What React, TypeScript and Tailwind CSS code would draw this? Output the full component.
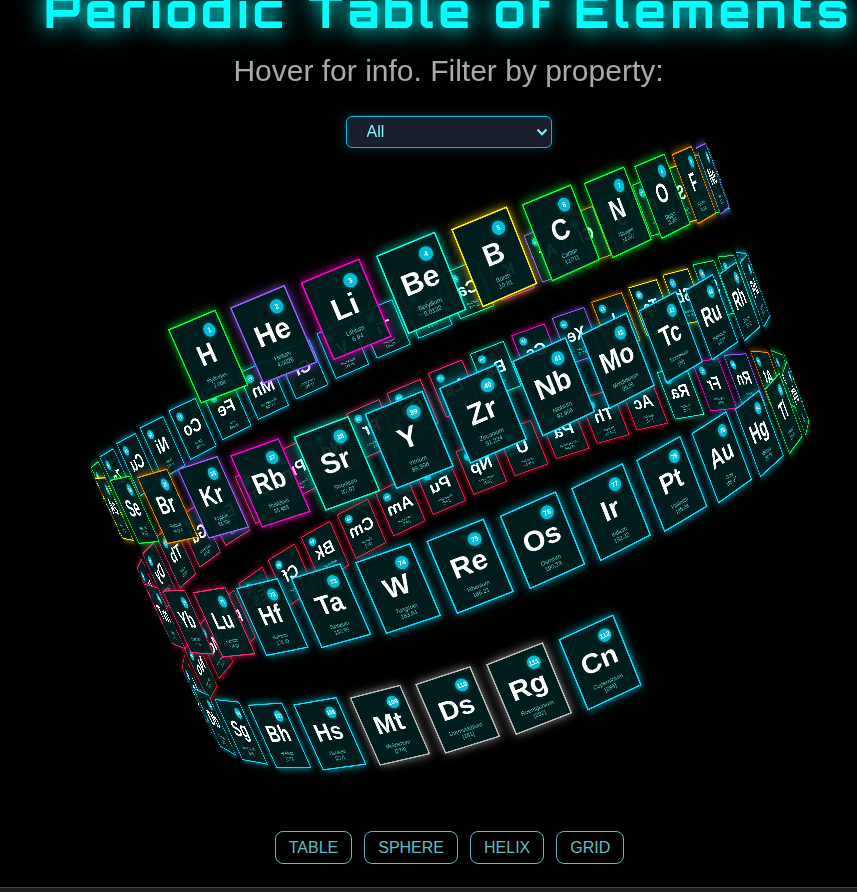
import React from "react";

type Category =
  | "nonmetal"
  | "noble"
  | "alkali"
  | "alkaline"
  | "metalloid"
  | "halogen"
  | "transition"
  | "post"
  | "lanthanide"
  | "actinide"
  | "unknown";

const TONES: Record<Category, string> = {
  nonmetal: "border-[#00ff33] shadow-[0_0_20px_rgba(0,255,51,0.7)]",
  noble: "border-[#9c5cff] shadow-[0_0_20px_rgba(156,92,255,0.7)]",
  alkali: "border-[#ff00cc] shadow-[0_0_20px_rgba(255,0,204,0.7)]",
  alkaline: "border-[#00ffd5] shadow-[0_0_20px_rgba(0,255,213,0.7)]",
  metalloid: "border-[#fff000] shadow-[0_0_20px_rgba(255,240,0,0.7)]",
  halogen: "border-[#ff9100] shadow-[0_0_20px_rgba(255,145,0,0.7)]",
  transition: "border-[#00e1ff] shadow-[0_0_20px_rgba(0,225,255,0.7)]",
  post: "border-[#00ff66] shadow-[0_0_20px_rgba(0,255,102,0.7)]",
  lanthanide: "border-[#ff2970] shadow-[0_0_20px_rgba(255,41,112,0.7)]",
  actinide: "border-[#ff1744] shadow-[0_0_20px_rgba(255,23,68,0.7)]",
  unknown: "border-[#bdbdbd] shadow-[0_0_20px_rgba(189,189,189,0.7)]",
};

const ELEMENTS: [string, string, string, Category][] = [
  ["H", "Hydrogen", "1.008", "nonmetal"],
  ["He", "Helium", "4.0026", "noble"],
  ["Li", "Lithium", "6.94", "alkali"],
  ["Be", "Beryllium", "9.0122", "alkaline"],
  ["B", "Boron", "10.81", "metalloid"],
  ["C", "Carbon", "12.011", "nonmetal"],
  ["N", "Nitrogen", "14.007", "nonmetal"],
  ["O", "Oxygen", "15.999", "nonmetal"],
  ["F", "Fluorine", "18.998", "halogen"],
  ["Ne", "Neon", "20.180", "noble"],
  ["Na", "Sodium", "22.990", "alkali"],
  ["Mg", "Magnesium", "24.305", "alkaline"],
  ["Al", "Aluminium", "26.982", "post"],
  ["Si", "Silicon", "28.085", "metalloid"],
  ["P", "Phosphorus", "30.974", "nonmetal"],
  ["S", "Sulfur", "32.06", "nonmetal"],
  ["Cl", "Chlorine", "35.45", "halogen"],
  ["Ar", "Argon", "39.948", "noble"],
  ["K", "Potassium", "39.098", "alkali"],
  ["Ca", "Calcium", "40.078", "alkaline"],
  ["Sc", "Scandium", "44.956", "transition"],
  ["Ti", "Titanium", "47.867", "transition"],
  ["V", "Vanadium", "50.942", "transition"],
  ["Cr", "Chromium", "51.996", "transition"],
  ["Mn", "Manganese", "54.938", "transition"],
  ["Fe", "Iron", "55.845", "transition"],
  ["Co", "Cobalt", "58.933", "transition"],
  ["Ni", "Nickel", "58.693", "transition"],
  ["Cu", "Copper", "63.546", "transition"],
  ["Zn", "Zinc", "65.38", "transition"],
  ["Ga", "Gallium", "69.723", "post"],
  ["Ge", "Germanium", "72.630", "metalloid"],
  ["As", "Arsenic", "74.922", "metalloid"],
  ["Se", "Selenium", "78.971", "nonmetal"],
  ["Br", "Bromine", "79.904", "halogen"],
  ["Kr", "Krypton", "83.798", "noble"],
  ["Rb", "Rubidium", "85.468", "alkali"],
  ["Sr", "Strontium", "87.62", "alkaline"],
  ["Y", "Yttrium", "88.906", "transition"],
  ["Zr", "Zirconium", "91.224", "transition"],
  ["Nb", "Niobium", "92.906", "transition"],
  ["Mo", "Molybdenum", "95.95", "transition"],
  ["Tc", "Technetium", "[98]", "transition"],
  ["Ru", "Ruthenium", "101.07", "transition"],
  ["Rh", "Rhodium", "102.91", "transition"],
  ["Pd", "Palladium", "106.42", "transition"],
  ["Ag", "Silver", "107.87", "transition"],
  ["Cd", "Cadmium", "112.41", "transition"],
  ["In", "Indium", "114.82", "post"],
  ["Sn", "Tin", "118.71", "post"],
  ["Sb", "Antimony", "121.76", "metalloid"],
  ["Te", "Tellurium", "127.60", "metalloid"],
  ["I", "Iodine", "126.90", "halogen"],
  ["Xe", "Xenon", "131.29", "noble"],
  ["Cs", "Cesium", "132.91", "alkali"],
  ["Ba", "Barium", "137.33", "alkaline"],
  ["La", "Lanthanum", "138.91", "lanthanide"],
  ["Ce", "Cerium", "140.12", "lanthanide"],
  ["Pr", "Praseodymium", "140.91", "lanthanide"],
  ["Nd", "Neodymium", "144.24", "lanthanide"],
  ["Pm", "Promethium", "[145]", "lanthanide"],
  ["Sm", "Samarium", "150.36", "lanthanide"],
  ["Eu", "Europium", "151.96", "lanthanide"],
  ["Gd", "Gadolinium", "157.25", "lanthanide"],
  ["Tb", "Terbium", "158.93", "lanthanide"],
  ["Dy", "Dysprosium", "162.50", "lanthanide"],
  ["Ho", "Holmium", "164.93", "lanthanide"],
  ["Er", "Erbium", "167.26", "lanthanide"],
  ["Tm", "Thulium", "168.93", "lanthanide"],
  ["Yb", "Ytterbium", "173.05", "lanthanide"],
  ["Lu", "Lutetium", "174.97", "lanthanide"],
  ["Hf", "Hafnium", "178.49", "transition"],
  ["Ta", "Tantalum", "180.95", "transition"],
  ["W", "Tungsten", "183.84", "transition"],
  ["Re", "Rhenium", "186.21", "transition"],
  ["Os", "Osmium", "190.23", "transition"],
  ["Ir", "Iridium", "192.22", "transition"],
  ["Pt", "Platinum", "195.08", "transition"],
  ["Au", "Gold", "196.97", "transition"],
  ["Hg", "Mercury", "200.59", "transition"],
  ["Tl", "Thallium", "204.38", "post"],
  ["Pb", "Lead", "207.2", "post"],
  ["Bi", "Bismuth", "208.98", "post"],
  ["Po", "Polonium", "[209]", "post"],
  ["At", "Astatine", "[210]", "halogen"],
  ["Rn", "Radon", "[222]", "noble"],
  ["Fr", "Francium", "[223]", "alkali"],
  ["Ra", "Radium", "[226]", "alkaline"],
  ["Ac", "Actinium", "[227]", "actinide"],
  ["Th", "Thorium", "232.04", "actinide"],
  ["Pa", "Protactinium", "231.04", "actinide"],
  ["U", "Uranium", "238.03", "actinide"],
  ["Np", "Neptunium", "[237]", "actinide"],
  ["Pu", "Plutonium", "[244]", "actinide"],
  ["Am", "Americium", "[243]", "actinide"],
  ["Cm", "Curium", "[247]", "actinide"],
  ["Bk", "Berkelium", "[247]", "actinide"],
  ["Cf", "Californium", "[251]", "actinide"],
  ["Es", "Einsteinium", "[252]", "actinide"],
  ["Fm", "Fermium", "[257]", "actinide"],
  ["Md", "Mendelevium", "[258]", "actinide"],
  ["No", "Nobelium", "[259]", "actinide"],
  ["Lr", "Lawrencium", "[266]", "actinide"],
  ["Rf", "Rutherfordium", "[267]", "transition"],
  ["Db", "Dubnium", "[268]", "transition"],
  ["Sg", "Seaborgium", "[269]", "transition"],
  ["Bh", "Bohrium", "[270]", "transition"],
  ["Hs", "Hassium", "[277]", "transition"],
  ["Mt", "Meitnerium", "[278]", "unknown"],
  ["Ds", "Darmstadtium", "[281]", "unknown"],
  ["Rg", "Roentgenium", "[282]", "unknown"],
  ["Cn", "Copernicium", "[285]", "transition"],
];

const FILTERS = [
  "All",
  "Alkali Metal",
  "Alkaline Earth Metal",
  "Transition Metal",
  "Post-transition Metal",
  "Metalloid",
  "Nonmetal",
  "Halogen",
  "Noble Gas",
  "Lanthanide",
  "Actinide",
];

const LAYOUTS = ["Table", "Sphere", "Helix", "Grid"];

// Camera orbit around the helix, in radians, and its distance from the centre.
const FOCAL = 1253;
const CAMERA = { roll: -0.3922, pitch: -0.1463, yaw: -0.4561, distance: 3422 };
const HELIX = { radius: 900, top: -456, rise: 8, step: 0.175 };

function cardTransform(index: number) {
  const { roll, pitch, yaw, distance } = CAMERA;
  const { radius, top, rise, step } = HELIX;
  return [
    `perspective(${FOCAL}px)`,
    `translateZ(${FOCAL - distance}px)`,
    `rotateZ(${roll}rad)`,
    `rotateX(${pitch}rad)`,
    `rotateY(${yaw + step * index}rad)`,
    `translate3d(0px, ${top + rise * index}px, ${radius}px)`,
  ].join(" ");
}

// Larger is closer to the camera.
function cardDepth(index: number) {
  const { pitch, yaw } = CAMERA;
  const { radius, top, rise, step } = HELIX;
  const y = top + rise * index;
  const z = radius * Math.cos(yaw + step * index);
  return Math.round(2000 + y * Math.sin(pitch) + z * Math.cos(pitch));
}

function ElementCard({ index }: { index: number }) {
  const [symbol, name, mass, category] = ELEMENTS[index];
  return (
    <article
      className={`absolute -mt-[83px] -ml-[63px] h-[166px] w-[126px] border-3 bg-[#001e1e]/93 text-center ${TONES[category]}`}
      style={{ transform: cardTransform(index), zIndex: cardDepth(index) }}
    >
      <span className="absolute top-4 right-4 flex size-7 items-center justify-center rounded-full bg-[#00bcd4] text-sm font-bold text-white shadow-[0_0_8px_rgba(0,188,212,0.6)]">
        {index + 1}
      </span>
      <h2 className="absolute inset-x-0 top-10 text-[60px] leading-[68px] font-bold text-white">{symbol}</h2>
      <p className="absolute inset-x-0 bottom-3.5 text-xs leading-[14px] text-[#7fffff]/75">
        {name}
        <br />
        {mass}
      </p>
    </article>
  );
}

export default function App() {
  return (
    <div className="relative flex min-h-screen flex-col overflow-hidden bg-black font-['Liberation_Sans',Arial,sans-serif]">
      <section
        aria-label="Elements"
        className="absolute inset-0 isolate flex items-center justify-center pb-6 pl-[42px]"
      >
        <div className="relative size-0">
          {ELEMENTS.map(([symbol], index) => (
            <ElementCard key={symbol} index={index} />
          ))}
        </div>
      </section>

      <header className="relative -mt-[22px] flex flex-col items-center pl-10">
        <h1 className="text-[46px] leading-[64px] font-extrabold tracking-widest whitespace-nowrap text-[#00ffff] [font-family:Orbitron,'DejaVu_Sans',sans-serif] [text-shadow:0_0_20px_#00ffff,0_0_40px_rgba(0,255,255,0.4)]">
          Periodic Table of Elements
        </h1>
        <label htmlFor="filter" className="mt-[11px] text-[30px] leading-9 text-[#aaaaaa]">
          Hover for info. Filter by property:
        </label>
        <div className="relative mt-[27px]">
          <select
            id="filter"
            defaultValue="All"
            className="block h-8 w-[206px] appearance-none rounded-md border border-[#00bcd4] bg-[#1a1f2e] px-5 text-base text-[#80f4ff] shadow-[0_0_10px_rgba(0,188,212,0.3)]"
          >
            {FILTERS.map((filter) => (
              <option key={filter}>{filter}</option>
            ))}
          </select>
          <svg
            viewBox="0 0 12 8"
            aria-hidden="true"
            className="pointer-events-none absolute top-3 right-1 h-2 w-3 fill-none stroke-[#80f4ff] stroke-2"
          >
            <path d="M1.5 1.5 6 6.2 10.5 1.5" />
          </svg>
        </div>
      </header>

      <nav className="relative mt-auto mb-[23px] flex justify-center gap-3 pl-[42px]">
        {LAYOUTS.map((layout) => (
          <button
            key={layout}
            type="button"
            className="h-[33px] rounded-lg border border-[#5fbfbf] px-[13px] text-base text-[#5fbfbf] uppercase"
          >
            {layout}
          </button>
        ))}
      </nav>
      <footer className="relative h-[5px] border-t border-[#444444] bg-[#1c1c1c]" />
    </div>
  );
}
